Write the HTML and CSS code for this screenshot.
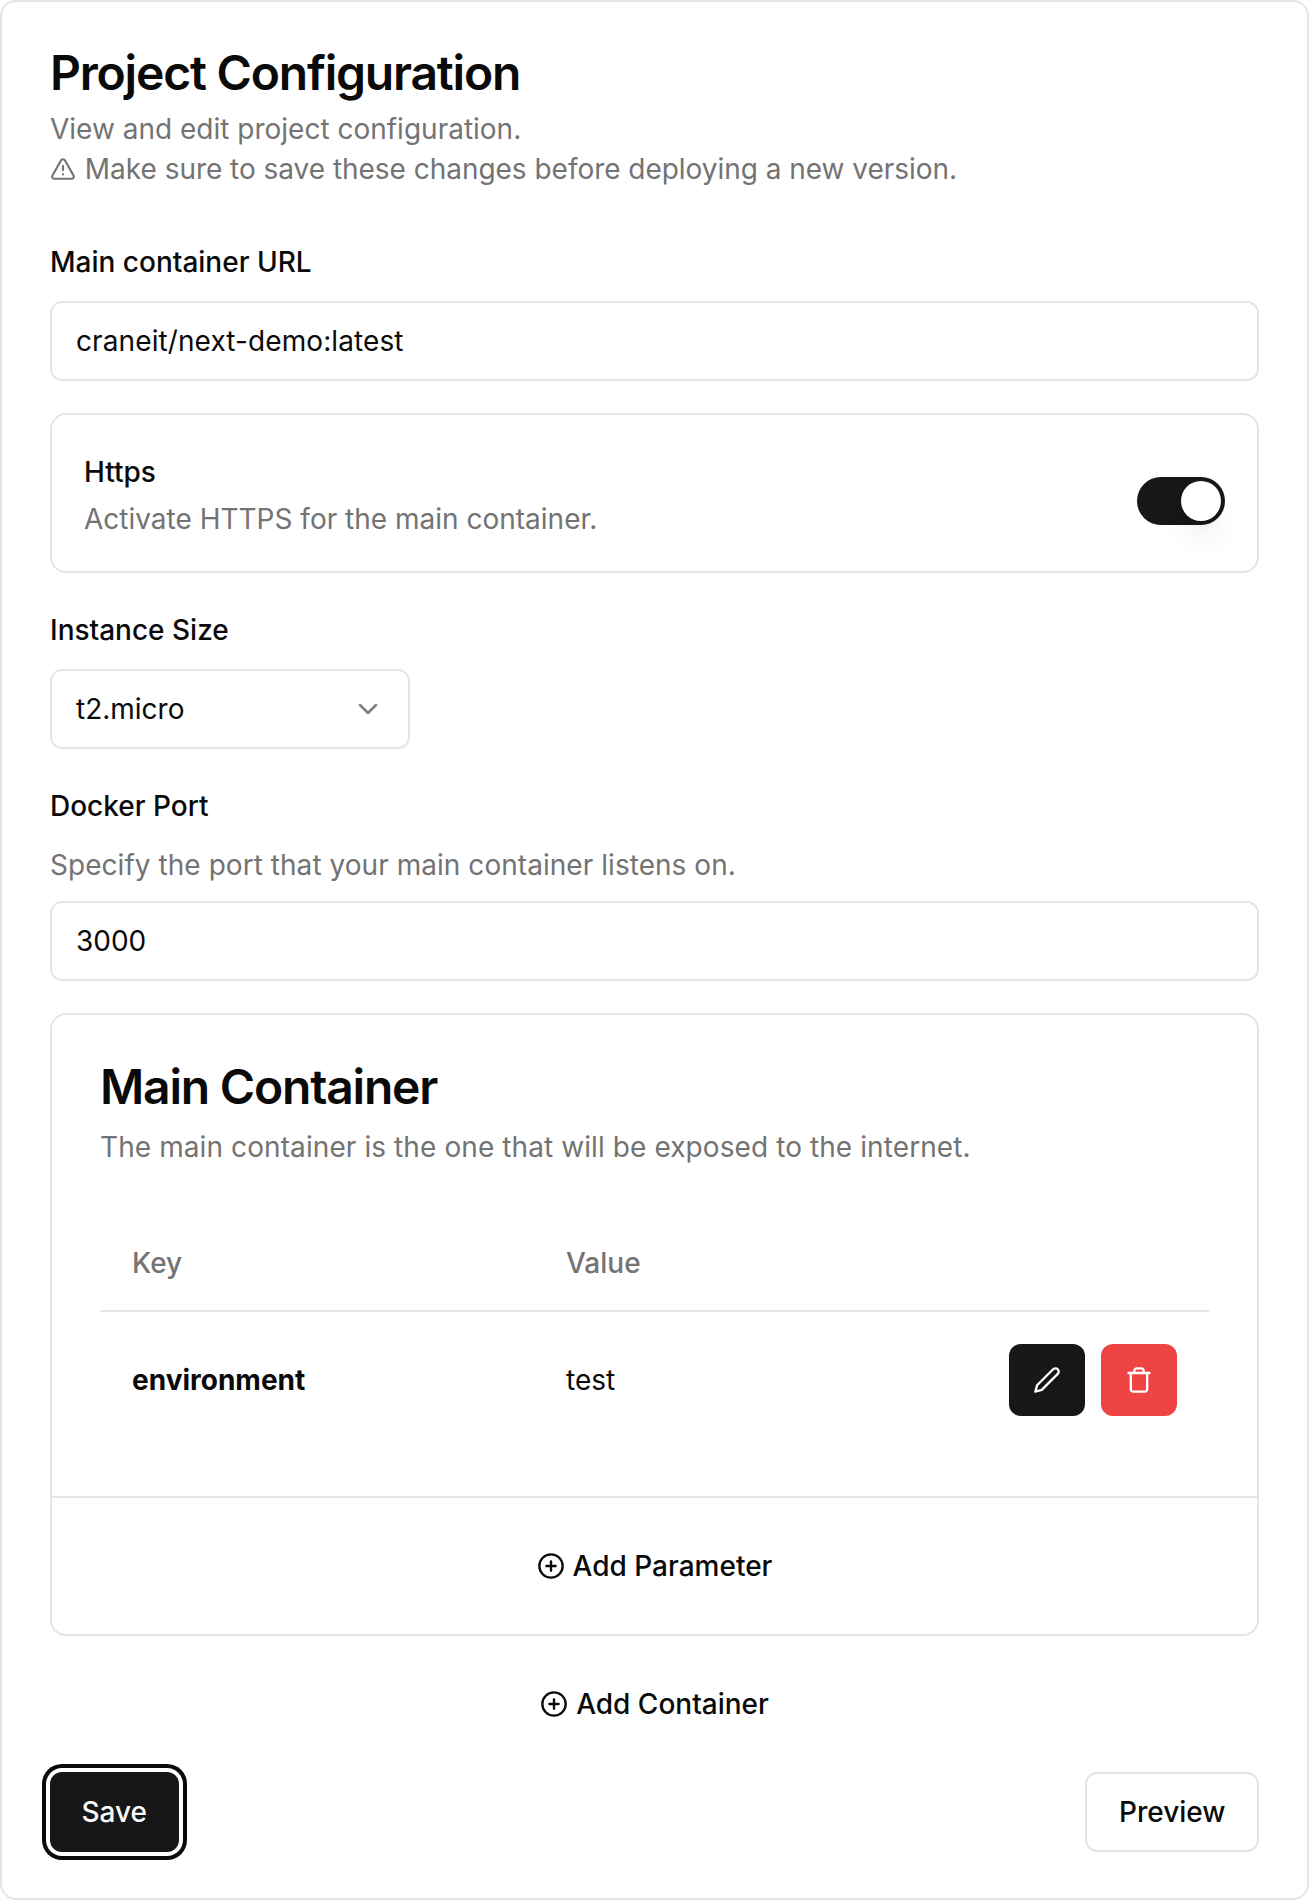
FILE: index.html
```html
<!DOCTYPE html>
<html lang="en">

<head>
    <meta charset="UTF-8">
    <meta name="viewport" content="width=device-width, initial-scale=1.0">
    <title>Project Configuration</title>
    <link rel="stylesheet" href="styles.css">
</head>

<body>
    <div class="card page-card">
        <div class="page-header">
            <h1>Project Configuration</h1>
            <p class="muted">View and edit project configuration.</p>
            <p class="muted warn-line">
                <svg class="icon-warn" viewBox="0 0 24 24">
                    <path d="m21.73 18-8-14a2 2 0 0 0-3.48 0l-8 14A2 2 0 0 0 4 21h16a2 2 0 0 0 1.73-3Z" />
                    <path d="M12 9v4" />
                    <path d="M12 17h.01" />
                </svg>
                Make sure to save these changes before deploying a new version.
            </p>
        </div>

        <!-- Main container url -->
        <div class="field field-url">
            <label class="label">Main container URL</label>
            <div class="input url-value">craneit/next-demo:latest</div>
        </div>

        <div class="switch-row">
            <div class="switch-text">
                <div class="label">Https</div>
                <p class="muted switch-desc">Activate HTTPS for the main container.</p>
            </div>
            <div class="switch"><span class="thumb"></span></div>
        </div>

        <div class="field field-size">
            <label class="label">Instance Size</label>
            <div class="input select">
                <span>t2.micro</span>
                <svg class="icon chevron" viewBox="0 0 24 24">
                    <path d="m6 9 6 6 6-6" />
                </svg>
            </div>
        </div>

        <div class="field field-port">
            <label class="label">Docker Port</label>
            <p class="muted port-desc">Specify the port that your main container listens on.</p>
            <div class="input">3000</div>
        </div>

        <!-- Container card -->
        <div class="card container-card">
            <div class="container-body">
                <h2>Main Container</h2>
                <p class="muted container-desc">The main container is the one that will be exposed to the internet.</p>
                <table>
                    <thead>
                        <tr>
                            <th class="col-key">Key</th>
                            <th>Value</th>
                            <th></th>
                        </tr>
                    </thead>
                    <tbody>
                        <tr>
                            <td class="param-key">environment</td>
                            <td>test</td>
                            <td>
                                <div class="actions">
                                    <button class="btn-icon dark">
                                        <svg class="icon" viewBox="0 0 24 24">
                                            <path d="M17 3a2.85 2.83 0 1 1 4 4L7.5 20.5 2 22l1.5-5.5Z" />
                                        </svg>
                                    </button>
                                    <button class="btn-icon red">
                                        <svg class="icon" viewBox="0 0 24 24">
                                            <path d="M3 6h18" />
                                            <path d="M19 6v14c0 1-1 2-2 2H7c-1 0-2-1-2-2V6" />
                                            <path d="M8 6V4c0-1 1-2 2-2h4c1 0 2 1 2 2v2" />
                                        </svg>
                                    </button>
                                </div>
                            </td>
                        </tr>
                    </tbody>
                </table>
            </div>
            <div class="container-footer">
                <button class="btn-ghost">
                    <svg class="icon" viewBox="0 0 24 24">
                        <circle cx="12" cy="12" r="10" />
                        <path d="M8 12h8" />
                        <path d="M12 8v8" />
                    </svg>
                    Add Parameter
                </button>
            </div>
        </div>

        <div class="add-container">
            <button class="btn-ghost">
                <svg class="icon" viewBox="0 0 24 24">
                    <circle cx="12" cy="12" r="10" />
                    <path d="M8 12h8" />
                    <path d="M12 8v8" />
                </svg>
                Add Container
            </button>
        </div>

        <div class="page-footer">
            <button class="btn btn-save">Save</button>
            <button class="btn btn-preview">Preview</button>
        </div>
    </div>
</body>

</html>
```

FILE: styles.css
```css
* {
    box-sizing: border-box;
}

body {
    margin: 0;
    background-color: #ffffff;
    color: #0a0a0a;
    font-family: 'Inter', 'Liberation Sans', sans-serif;
    font-size: 28px;
    line-height: 40px;
}

h1,
h2,
p {
    margin: 0;
}

button {
    font: inherit;
    color: inherit;
    border: 0;
    background: none;
    padding: 0;
}

.card {
    background-color: #ffffff;
    border: 2px solid #e5e5e5;
    border-radius: 16px;
}

.page-card {
    width: 1309px;
    height: 1900px;
    padding: 47px 48px 48px;
}

.muted {
    color: #737373;
}

.page-header h1,
.container-body h2 {
    font-size: 48px;
    line-height: 48px;
    font-weight: 600;
    letter-spacing: -1.2px;
}

.page-header h1 {
    margin-bottom: 12px;
}

.warn-line {
    letter-spacing: -0.03px;
}

.icon-warn {
    width: 26px;
    height: 26px;
    margin-right: 1px;
    vertical-align: -3px;
    fill: none;
    stroke: currentColor;
    stroke-width: 2;
    stroke-linecap: round;
    stroke-linejoin: round;
}

.icon {
    width: 28px;
    height: 28px;
    flex-shrink: 0;
    fill: none;
    stroke: currentColor;
    stroke-width: 2;
    stroke-linecap: round;
    stroke-linejoin: round;
}

.label {
    display: block;
    font-weight: 500;
    line-height: 28px;
}

.input {
    height: 80px;
    border: 2px solid #e5e5e5;
    border-radius: 12px;
    padding: 0 24px;
    display: flex;
    align-items: center;
}

.url-value {
    letter-spacing: 0.1px;
}

.field-url {
    margin-top: 59px;
}

.field-url .label,
.field-size .label {
    margin-bottom: 25px;
}

.switch-row {
    margin-top: 32px;
    height: 160px;
    padding: 0 32px;
    border: 2px solid #e5e5e5;
    border-radius: 16px;
    display: flex;
    align-items: center;
    justify-content: space-between;
}

.switch-text {
    padding-top: 10px;
}

.switch-desc {
    margin-top: 13px;
}

.switch {
    width: 88px;
    height: 48px;
    margin-top: 16px;
    border-radius: 24px;
    background-color: #171717;
    padding: 4px;
    display: flex;
    justify-content: flex-end;
}

.thumb {
    width: 40px;
    height: 40px;
    border-radius: 50%;
    background-color: #ffffff;
    box-shadow: 0 20px 30px -6px rgba(0, 0, 0, 0.1), 0 8px 12px -8px rgba(0, 0, 0, 0.1);
}

.field-size {
    margin-top: 43px;
}

.select {
    width: 360px;
    justify-content: space-between;
}

.chevron {
    width: 32px;
    height: 32px;
    opacity: 0.5;
}

.field-port {
    margin-top: 43px;
}

.port-desc {
    margin: 25px 0 16px;
    letter-spacing: 0.045px;
}

.container-card {
    margin-top: 32px;
}

.container-body {
    padding: 48px;
}

.container-desc {
    margin: 16px 0 48px;
    letter-spacing: 0.09px;
}

table {
    width: 100%;
    border-collapse: collapse;
}

th {
    height: 96px;
    padding: 0 32px;
    text-align: left;
    font-weight: 500;
    color: #737373;
    border-bottom: 2px solid #e5e5e5;
}

.col-key {
    width: 434px;
}

td {
    padding: 32px;
}

.param-key {
    font-weight: 700;
}

.actions {
    display: flex;
    justify-content: flex-end;
    gap: 16px;
}

.btn-icon {
    width: 76px;
    height: 72px;
    border-radius: 12px;
    color: #ffffff;
    display: flex;
    align-items: center;
    justify-content: center;
}

.btn-icon.dark {
    background-color: #171717;
}

.btn-icon.red {
    background-color: #ef4444;
}

.container-footer {
    border-top: 2px solid #e5e5e5;
    padding: 28px 0;
    display: flex;
    justify-content: center;
}

.btn-ghost {
    height: 80px;
    display: flex;
    align-items: center;
    gap: 8px;
    font-weight: 500;
}

.add-container {
    margin-top: 28px;
    display: flex;
    justify-content: center;
}

.page-footer {
    margin-top: 28px;
    display: flex;
    justify-content: space-between;
}

.btn {
    height: 80px;
    border-radius: 12px;
    padding: 0 31.5px;
    font-weight: 500;
}

.btn-save {
    background-color: #171717;
    color: #fafafa;
    box-shadow: 0 0 0 4px #ffffff, 0 0 0 8px #0a0a0a;
}

.btn-preview {
    border: 2px solid #e5e5e5;
    background-color: #ffffff;
}
```
